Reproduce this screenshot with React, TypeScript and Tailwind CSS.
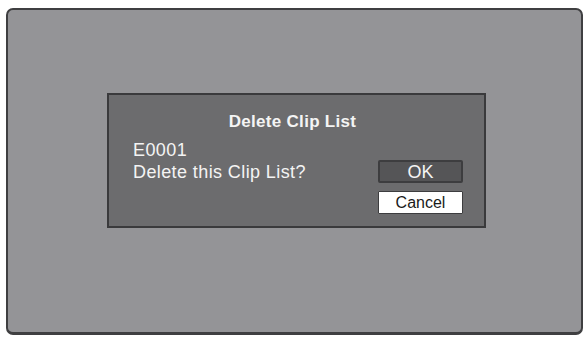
const font = { fontFamily: '"Liberation Sans", Arial, sans-serif' };

export default function App() {
  return (
    <div className="w-[587px] h-[337px] bg-white pt-[8px] pl-[6px]" style={font}>
      <div className="w-[577px] h-[327px] rounded-[7px] border-2 border-b-[3px] border-[#3f3f41] bg-[#949497] pl-[99px] pt-[83px]">
        <div className="w-[379px] h-[135px] border-2 border-[#3a3a3c] bg-[#6c6c6e] text-[#f4f4f4]">
          <div className="pt-[17px] pr-[8px] text-center text-[17px] font-bold leading-[20px] tracking-[0.3px]">
            Delete Clip List
          </div>
          <div className="flex mt-[7px]">
            <div className="pl-[24px] text-[18px] leading-[22px] tracking-[0.4px] flex-1">
              <div>E0001</div>
              <div>Delete this Clip List?</div>
            </div>
            <div className="pt-[21px] pr-[21px] flex flex-col gap-[8px]">
              <div className="w-[85px] h-[23px] rounded-[2px] border-2 border-[#3d3d3f] bg-[#555557] flex items-center justify-center text-[18px] leading-none text-[#f4f4f4]">
                OK
              </div>
              <div className="w-[85px] h-[23px] rounded-[1px] border border-[#3d3d3f] bg-white flex items-center justify-center text-[16px] leading-none text-[#1a1a1a]">
                Cancel
              </div>
            </div>
          </div>
        </div>
      </div>
    </div>
  );
}
